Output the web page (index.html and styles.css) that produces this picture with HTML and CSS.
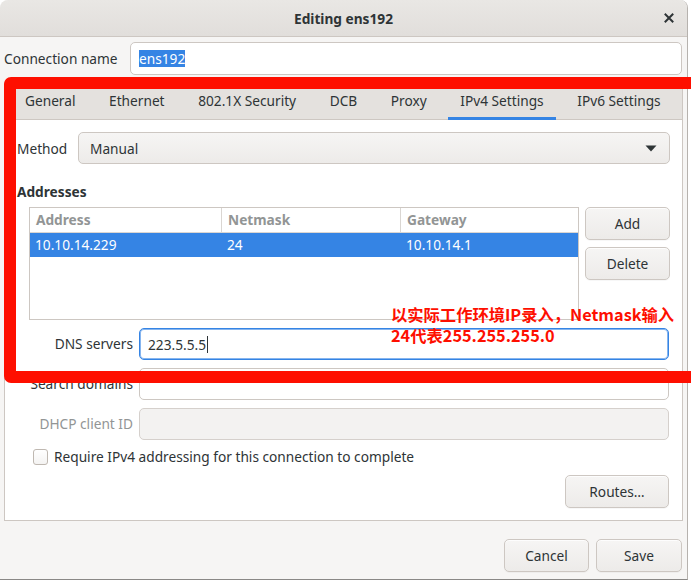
FILE: index.html
```html
<!DOCTYPE html>
<html lang="en">
<head>
<meta charset="utf-8">
<title>Editing ens192</title>
<link rel="stylesheet" href="styles.css">
</head>
<body>
<div class="window">
  <header class="titlebar">
    <span class="title">Editing ens192</span>
    <span class="close" aria-label="Close">
      <svg width="10" height="10" viewBox="0 0 10 10"><path d="M1.5 1.5 L8.5 8.5 M8.5 1.5 L1.5 8.5" stroke="#2e3436" stroke-width="2" stroke-linecap="square"/></svg>
    </span>
  </header>

  <div class="content">
    <div class="conn-row">
      <span class="conn-label">Connection name</span>
      <div class="entry conn-entry"><span class="selected-text">ens192</span></div>
    </div>

    <div class="notebook">
      <div class="tabs">
        <span class="tab">General</span>
        <span class="tab">Ethernet</span>
        <span class="tab">802.1X Security</span>
        <span class="tab">DCB</span>
        <span class="tab">Proxy</span>
        <span class="tab active">IPv4 Settings</span>
        <span class="tab">IPv6 Settings</span>
      </div>

      <div class="page">
        <div class="method-row">
          <span class="method-label">Method</span>
          <div class="combo">
            <span>Manual</span>
            <svg class="combo-arrow" width="12" height="7" viewBox="0 0 12 7"><path d="M0.5 0.5 H11.5 L6 6.5 Z" fill="#2e3436"/></svg>
          </div>
        </div>

        <div class="section-title">Addresses</div>

        <div class="addr-area">
          <div class="addr-table">
            <div class="thead">
              <span class="th c1">Address</span>
              <span class="th c2">Netmask</span>
              <span class="th c3">Gateway</span>
            </div>
            <div class="trow selected">
              <span class="td c1">10.10.14.229</span>
              <span class="td c2">24</span>
              <span class="td c3">10.10.14.1</span>
            </div>
          </div>
          <div class="side-buttons">
            <button class="btn side-btn">Add</button>
            <button class="btn side-btn">Delete</button>
          </div>
        </div>

        <div class="form-grid">
          <span class="form-label">DNS servers</span>
          <div class="entry focused"><span>223.5.5.5</span><span class="caret"></span></div>
          <span class="form-label">Search domains</span>
          <div class="entry"></div>
          <span class="form-label dim">DHCP client ID</span>
          <div class="entry disabled"></div>
        </div>

        <label class="check-row">
          <span class="checkbox"></span>
          <span>Require IPv4 addressing for this connection to complete</span>
        </label>

        <div class="routes-row">
          <button class="btn routes-btn">Routes…</button>
        </div>
      </div>
    </div>

    <div class="dialog-buttons">
      <button class="btn dlg-btn">Cancel</button>
      <button class="btn dlg-btn save">Save</button>
    </div>
  </div>

  <div class="annotation-box"></div>
  <div class="annotation-text">以实际工作环境IP录入，Netmask输入<br>24代表255.255.255.0</div>
</div>
</body>
</html>
```

FILE: styles.css
```css
html, body {
  margin: 0;
  padding: 0;
  overflow: hidden;
  background: #ffffff;
}

body {
  width: 691px;
  height: 580px;
  font-family: "Noto Sans", "Open Sans", sans-serif;
  font-size: 13.7px;
  color: #2e3436;
}

.window {
  position: relative;
  width: 687px;
  height: 579px;
  background: #f6f5f4;
  border-right: 1px solid #b6b2ae;
  border-bottom: 1px solid #8a8886;
  border-radius: 8px 8px 0 0;
  box-sizing: content-box;
}

.titlebar {
  height: 36px;
  border-bottom: 1px solid #cdc7c2;
  background: linear-gradient(#e9e7e4, #e1dedb);
  border-radius: 8px 8px 0 0;
  display: flex;
  align-items: center;
  justify-content: center;
  position: relative;
}

.title {
  font-weight: 700;
  font-size: 13.7px;
  color: #2e3436;
}

.close {
  position: absolute;
  right: 13px;
  top: 13px;
  width: 10px;
  height: 10px;
  display: flex;
}

.content {
  padding: 5px 5px 0 4px;
}

.conn-row {
  display: flex;
  align-items: center;
  height: 33px;
}

.conn-label {
  width: 126px;
  flex: none;
}

.entry {
  box-sizing: border-box;
  height: 32px;
  border: 1px solid #cdc7c2;
  border-radius: 5px;
  background: #ffffff;
  display: flex;
  align-items: center;
  padding-left: 8px;
  flex: 1;
}

.conn-entry {
  height: 33px;
}

.selected-text {
  background: #3584e4;
  color: #ffffff;
  line-height: 17px;
}

.notebook {
  margin-top: 7px;
  border: 1px solid #cdc7c2;
  box-sizing: border-box;
  width: 679px;
}

.tabs {
  box-sizing: border-box;
  height: 37px;
  background: #e4e1de;
  border-bottom: 1px solid #cdc7c2;
  display: flex;
  align-items: stretch;
  padding-left: 8px;
  gap: 9.6px;
}

.tab {
  display: flex;
  align-items: center;
  padding: 0 12px;
  color: #2e3436;
  box-sizing: border-box;
  border-bottom: 3px solid transparent;
  margin-bottom: -1px;
}

.tab.active {
  border-bottom-color: #3584e4;
}

.page {
  background: #ffffff;
  padding: 12px;
}

.method-row {
  display: flex;
  align-items: center;
  height: 32px;
}

.method-label {
  width: 61px;
  flex: none;
}

.combo {
  flex: 1;
  box-sizing: border-box;
  height: 32px;
  border: 1px solid #cdc7c2;
  border-radius: 5px;
  background: linear-gradient(#f6f5f4, #edebe9);
  display: flex;
  align-items: center;
  justify-content: space-between;
  padding: 0 12px 0 11px;
}

.section-title {
  font-weight: 700;
  margin-top: 18px;
  line-height: 20px;
  height: 20px;
}

.addr-area {
  display: flex;
  margin-top: 5px;
  margin-left: 12px;
  gap: 6px;
}

.addr-table {
  box-sizing: border-box;
  width: 550px;
  height: 113px;
  border: 1px solid #cdc7c2;
  background: #ffffff;
}

.thead, .trow {
  display: flex;
}

.thead {
  height: 25px;
  box-sizing: border-box;
  border-bottom: 1px solid #dad6d2;
}

.th {
  font-weight: 700;
  color: #929595;
  display: flex;
  align-items: center;
  padding-left: 6px;
  padding-bottom: 1px;
  box-sizing: border-box;
}

.th + .th {
  border-left: 1px solid #dad6d2;
}

.c1 { width: 191px; }
.c2 { width: 179px; }
.c3 { flex: 1; }

.trow {
  height: 24px;
}

.trow.selected {
  background: #3584e4;
  color: #ffffff;
}

.td {
  display: flex;
  align-items: center;
  padding-left: 5px;
  padding-bottom: 1px;
  box-sizing: border-box;
}

.td.c2, .td.c3 { padding-left: 6px; }

.side-buttons {
  display: flex;
  flex-direction: column;
  gap: 7px;
}

.btn {
  font-family: "Noto Sans", "Open Sans", sans-serif;
  font-size: 13.7px;
  color: #2e3436;
  box-sizing: border-box;
  height: 33px;
  border: 1px solid #cdc7c2;
  border-radius: 5px;
  background: linear-gradient(#f6f5f4, #edebe9);
  box-shadow: inset 0 1px rgba(255,255,255,0.8), 0 1px rgba(0,0,0,0.03);
  padding: 0;
}

.side-btn {
  width: 85px;
}

.form-grid {
  display: grid;
  grid-template-columns: 116px 1fr;
  column-gap: 6px;
  row-gap: 8px;
  margin-top: 8px;
  margin-right: 1px;
  align-items: center;
}

.form-label {
  text-align: right;
  margin-top: -2px;
}

.form-label.dim {
  color: #929595;
}

.entry.focused {
  border-color: #3584e4;
  box-shadow: inset 0 0 0 1px rgba(53,132,228,0.6);
}

.entry.disabled {
  background: #f3f2f1;
  border-color: #d5d0cc;
}

.caret {
  width: 1px;
  height: 17px;
  background: #2e3436;
  margin-left: 1px;
}

.check-row {
  display: flex;
  align-items: center;
  gap: 6px;
  margin-top: 9px;
  margin-left: 16px;
  height: 16px;
}

.check-row span:last-child {
  margin-top: -2px;
}

.checkbox {
  box-sizing: border-box;
  width: 15px;
  height: 16px;
  border: 1px solid #bfb8b1;
  border-radius: 3px;
  background: linear-gradient(#ffffff, #f4f3f2);
}

.routes-row {
  display: flex;
  justify-content: flex-end;
  margin-top: 10px;
  margin-right: 1px;
}

.routes-btn {
  width: 104px;
}

.dialog-buttons {
  display: flex;
  justify-content: flex-end;
  gap: 7px;
  margin-top: 18px;
}

.dlg-btn {
  width: 85px;
}

.dlg-btn.save {
  width: 86px;
}

.annotation-box {
  position: absolute;
  left: 4px;
  top: 77px;
  width: 710px;
  height: 306px;
  box-sizing: border-box;
  border: 12px solid #fe0f00;
  border-radius: 7px;
  pointer-events: none;
}

.annotation-text {
  position: absolute;
  left: 391px;
  top: 304px;
  font-family: "Noto Sans CJK SC", "Noto Sans", sans-serif;
  font-weight: 700;
  font-size: 16.3px;
  line-height: 21px;
  color: #fe0f00;
  white-space: nowrap;
}
```
